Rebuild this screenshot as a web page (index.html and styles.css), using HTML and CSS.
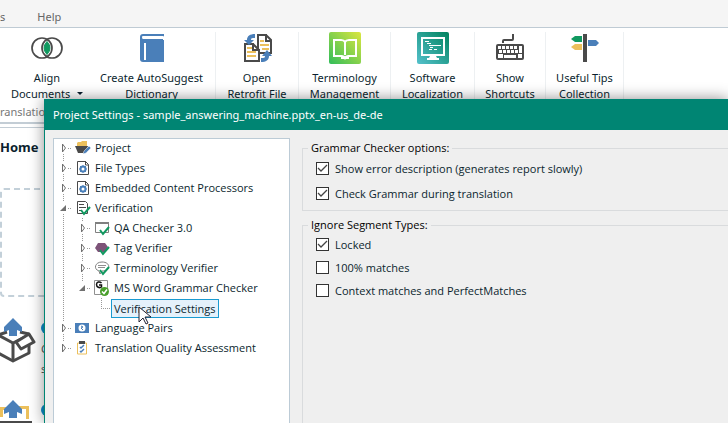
FILE: index.html
```html
<!DOCTYPE html>
<html lang="en">
<head>
<meta charset="utf-8">
<title>Project Settings</title>
<link rel="stylesheet" href="styles.css">
</head>
<body>
<div class="app">
  <nav class="tabs"><a href="#addins">s</a><a href="#help">Help</a></nav>
  <div class="ribbon">
    <button class="tool"><svg width="32" height="32" viewBox="0 0 32 32"><path d="M16 9.500q6 6.500 0 13q-6-6.500 0-13z" fill="#109960" stroke="#109960"/><g fill="none" stroke="#4a4a4a" stroke-width="1.700"><circle cx="11" cy="16" r="10"/><circle cx="21" cy="16" r="10"/></g></svg><span>Align<br>Documents <i class="caret"></i></span></button>
    <button class="tool"><svg width="32" height="32" viewBox="0 0 32 32"><path d="M7 2h21v28H7a3 3 0 0 1-3-3V5a3 3 0 0 1 3-3z" fill="#4a7fb9"/><path d="M6 5q0-1 1-1h20q1 0 1 1v3h-1V7H7q-1 0-1-2z" fill="#fff"/><path d="M8 11h2v17H8z" fill="#fff"/></svg><span>Create AutoSuggest<br>Dictionary</span></button>
    <button class="tool sep"><svg width="32" height="32" viewBox="0 0 32 32"><path d="M17 3h8l5 5v13H17z" fill="#fff" stroke="#4a4a4a" stroke-width="2"/><path d="M25 2v7h6" fill="none" stroke="#4a4a4a" stroke-width="2"/><path d="M19 9h4M19 13h9M21 17h7" stroke="#ecc05c" stroke-width="2"/><path d="M4 12h8l6 6v11H4z" fill="#fff" stroke="#4a4a4a" stroke-width="2"/><path d="M12 11v7h7" fill="none" stroke="#4a4a4a" stroke-width="2"/><path d="M6 16h5M6 20h9M6 24h9" stroke="#ecc05c" stroke-width="2"/><path d="M3 8h3c0-4 3-6 8-6v4c-3 0-4 0-4 2h3l-5 5zM31 24h-3c0 4-3 6-8 6v-4c3 0 4 0 4-2h-3l5-6z" fill="#4a7fb9"/></svg><span>Open<br>Retrofit File</span></button>
    <button class="tool sep"><svg width="32" height="32" viewBox="0 0 32 32"><defs><linearGradient id="lime" x1="0" y1="1" x2="1" y2="0"><stop stop-color="#31bd59"/><stop offset="1" stop-color="#dce640"/></linearGradient></defs><rect width="32" height="32" rx="2" fill="url(#lime)"/><path d="M16 10q-1-2-4-2H5v16h8q2 0 3 2q1-2 3-2h8V8h-7q-3 0-4 2zv13" fill="none" stroke="#fff" stroke-width="2"/><path d="M12 25h8v2h-8z" fill="#fff"/></svg><span>Terminology<br>Management</span></button>
    <button class="tool sep"><svg width="32" height="32" viewBox="0 0 32 32"><defs><linearGradient id="teal" x1="0" y1="1" x2="1" y2="0"><stop stop-color="#55c1cc"/><stop offset="1" stop-color="#00835e"/></linearGradient></defs><rect width="32" height="32" rx="2" fill="url(#teal)"/><path d="M5 6h22v17H5z" fill="none" stroke="#fff" stroke-width="2"/><path d="M13 24h6l1 2h2v2H10v-2h2z" fill="#fff"/><path d="M8 9.500h4M10 11.500h4M12 13.500h7M19 13.500h5M13 15.500h3M12 17.500h3M17 17.500h3" stroke="#fff"/></svg><span>Software<br>Localization</span></button>
    <button class="tool sep"><svg width="32" height="32" viewBox="0 0 32 32"><path d="M9 11V9q0-1 1-1h8q1 0 1-1V2" fill="none" stroke="#4a4a4a" stroke-width="2"/><rect x="2" y="12" width="28" height="16" rx="2" fill="#4a4a4a"/><path d="M4 15.500h20M5 19.500h19" stroke="#fff" stroke-width="3" stroke-dasharray="3 1"/><path d="M25 14h3v7h-3zM4 22h5v4H4zM10 23h12v3H10zM24 22h4v4h-4z" fill="#fff"/></svg><span>Show<br>Shortcuts</span></button>
    <button class="tool sep last"><svg width="32" height="32" viewBox="0 0 32 32"><path d="M14 2h4v28h-4z" fill="#4a4a4a"/><path d="M13 4v6H6L2 7l4-3z" fill="#109960"/><path d="M13 12v6H6l-4-3 4-3z" fill="#ecc05c"/><path d="M19 8v6h8l3-3-3-3z" fill="#4a7fb9"/></svg><span>Useful Tips<br>Collection</span></button>
  </div>
  <div class="caption">ranslation</div>
  <main class="home">
    <h1>Home</h1>
    <div class="drop"></div>
    <div class="entry"><svg width="36" height="48" viewBox="0 0 36 48"><g fill="#fff" stroke="#4a4a4a" stroke-width="3" stroke-linejoin="round"><path d="M-2 18l15 8 16-8v18l-16 8-15-8"/><path d="M13 26v18M-2 18l9-3M20 15l9 2"/><path d="M16 25l13-8 5 8-13 7z"/></g><path d="M13 1l9 9v5l-5-2v6H9v-6l-5 2v-5z" fill="#4a7fb9"/></svg><p><b class="dot"></b>C<br>s</p></div>
    <div class="entry"><svg width="36" height="48" viewBox="0 0 36 48"><path d="M0 8h7v3H3v7H0zM18 7h11v13h-3V10h-8z" fill="#ecc05c"/><path d="M0 22h32v4H0z" fill="#4a4a4a"/><path d="M13 1l9 9v5l-5-2v6H9v-6l-5 2v-5z" fill="#4a7fb9"/></svg><p><b class="dot"></b></p></div>
  </main>
</div>
<section class="dialog" role="dialog" aria-labelledby="dialog-title">
  <h2 id="dialog-title">Project Settings - sample_answering_machine.pptx_en-us_de-de</h2>
  <svg class="defs" width="0" height="0"><defs>
    <symbol id="closed" viewBox="0 0 16 12"><path d="M3.500 2v8l3-4z" fill="#fff" stroke="#707070"/><path d="M9 6.500h4" stroke="#999" stroke-dasharray="1 1"/></symbol>
    <symbol id="open" viewBox="0 0 16 12"><path d="M7 3v6H1z" fill="#707070"/><path d="M9 6.500h4" stroke="#999" stroke-dasharray="1 1"/></symbol>
    <symbol id="gear" viewBox="0 0 16 16"><path d="M2.500 1.500h8l3 3v10h-11z" fill="#fff" stroke="#4a4a4a"/><path d="M10.500 1v4h3" fill="none" stroke="#4a4a4a"/><circle cx="8" cy="9" r="2.500" fill="none" stroke="#4a7fb9" stroke-width="2"/><path d="M8 5v1.500M8 11.500V13M4 9h1.500M10.500 9H12M5 6l1 1M11 6l-1 1M5 12l1-1M11 12l-1-1" stroke="#4a7fb9"/></symbol>
    <symbol id="tick" viewBox="0 0 16 16"><path d="M6 10l3 4 6-7" fill="none" stroke="#109960" stroke-width="2"/></symbol>
  </defs></svg>
  <div class="content">
    <ul class="tree">
      <li><div class="row"><svg class="exp"><use href="#closed"/></svg><svg class="ico" viewBox="0 0 16 16"><path d="M2 6V3l1-1h3l1-1h5v5z" fill="#ecc05c"/><path d="M0 6h13l-2 7H3z" fill="#4a4a4a"/><path d="M8 14l1-3 5-5 2 2-5 5z" fill="#4a7fb9" stroke="#fff" stroke-width=".5"/></svg><span>Project</span></div></li>
      <li><div class="row"><svg class="exp"><use href="#closed"/></svg><svg class="ico"><use href="#gear"/></svg><span>File Types</span></div></li>
      <li><div class="row"><svg class="exp"><use href="#closed"/></svg><svg class="ico"><use href="#gear"/></svg><span>Embedded Content Processors</span></div></li>
      <li><div class="row"><svg class="exp"><use href="#open"/></svg><svg class="ico" viewBox="0 0 16 16"><path d="M2.500 1.500h8l2 2v10h-10z" fill="#fff" stroke="#4a4a4a"/><path d="M4 4.500h5M4 7.500h7M4 10.500h3" stroke="#4a4a4a"/><use href="#tick"/></svg><span>Verification</span></div>
        <ul>
          <li><div class="row"><svg class="exp"><use href="#closed"/></svg><svg class="ico" viewBox="0 0 16 16"><path d="M1.500 2.500h13v10h-13z" fill="#fff" stroke="#808080"/><path d="M1 2h14v2H1z" fill="#808080"/><use href="#tick"/></svg><span>QA Checker 3.0</span></div></li>
          <li><div class="row"><svg class="exp"><use href="#closed"/></svg><svg class="ico" viewBox="0 0 16 16"><path d="M4 3h7l3 4-3 5H4L1 8z" fill="#7d5378"/><use href="#tick"/></svg><span>Tag Verifier</span></div></li>
          <li><div class="row"><svg class="exp"><use href="#closed"/></svg><svg class="ico" viewBox="0 0 16 16"><path d="M8 2c9 0 9 9 0 9l-2 3-1-3C-1 9 1 2 8 2z" fill="#fff" stroke="#808080"/><path d="M4 5.500h8M4 7.500h7" stroke="#909090"/><use href="#tick"/></svg><span>Terminology Verifier</span></div></li>
          <li><div class="row"><svg class="exp"><use href="#open"/></svg><svg class="ico" viewBox="0 0 16 16"><path d="M.500.500h13v14h-13z" fill="#fff" stroke="#909090"/><path d="M7.500 3C5.500 1 2.500 2 2.500 4.500S5.500 8.500 7.500 7V5H5" fill="none" stroke="#111" stroke-width="1.500"/><circle cx="10.500" cy="11.500" r="4.500" fill="#4aa02c"/><path d="M8 11.500l2 2 3-4" fill="none" stroke="#fff" stroke-width="1.500"/></svg><span>MS Word Grammar Checker</span></div>
            <ul class="leaf"><li><div class="row"><span class="selected">Verification Settings</span></div></li></ul>
          </li>
        </ul>
      </li>
      <li><div class="row"><svg class="exp"><use href="#closed"/></svg><svg class="ico" viewBox="0 0 16 16"><path d="M0 3h14v10H0z" fill="#4a7fb9"/><circle cx="7" cy="8" r="3.500" fill="#fff"/><path d="M6 6l2 1-2 1 2 2" fill="none" stroke="#4a7fb9"/></svg><span>Language Pairs</span></div></li>
      <li><div class="row"><svg class="exp"><use href="#closed"/></svg><svg class="ico" viewBox="0 0 16 16"><path d="M2.500 3h9v11h-9z" fill="#fff" stroke="#ecc05c"/><path d="M4 1h6v3H4z" fill="#4a4a4a"/><path d="M5 7l1 1 3-3M5 11l1 1 3-3" fill="none" stroke="#4a7fb9" stroke-width="1.500"/></svg><span>Translation Quality Assessment</span></div></li>
    </ul>
    <div class="options">
      <fieldset>
        <legend>Grammar Checker options:</legend>
        <label><input type="checkbox" checked>Show error description (generates report slowly)</label>
        <label><input type="checkbox" checked>Check Grammar during translation</label>
      </fieldset>
      <fieldset class="types">
        <legend>Ignore Segment Types:</legend>
        <label><input type="checkbox" checked>Locked</label>
        <label><input type="checkbox">100% matches</label>
        <label><input type="checkbox">Context matches and PerfectMatches</label>
      </fieldset>
    </div>
  </div>
</section>
<svg class="pointer" width="14" height="20" viewBox="0 0 14 20"><path d="M1 1v15l4-4 3 6 2-1-3-6h6z" fill="#fff" stroke="#223"/></svg>
</body>
</html>
```
FILE: styles.css
```css
* { box-sizing: border-box; }
body {
  margin: 0;
  height: 100vh;
  overflow: hidden;
  position: relative;
  font: 11px/16px "Noto Sans", "Open Sans", sans-serif;
  color: #0b1f2e;
  background: #fff;
}
.app { height: 100%; overflow: hidden; }
.tabs {
  display: flex;
  gap: 32px;
  height: 28px;
  padding-top: 9px;
  background: #f5f5f5;
  border-bottom: 1px solid #bfcbd4;
}
.tabs a { color: #666; text-decoration: none; }
.ribbon {
  display: grid;
  grid-template-columns: 94px 121px 83px 92px 84px 71px 79px;
  padding-top: 4px;
}
.tool {
  display: flex;
  flex-direction: column;
  align-items: center;
  gap: 6px;
  height: 72px;
  padding: 0;
  border: 0;
  background: none;
  font: inherit;
  color: inherit;
  white-space: nowrap;
}
.tool:nth-child(2) { padding-right: 6px; }
.tool svg { flex: none; }
.sep { border-left: 1px solid #edf0f2; }
.last { border-right: 1px solid #edf0f2; }
.caret {
  display: inline-block;
  margin-left: 4px;
  border: 3px solid transparent;
  border-top-color: #0b1f2e;
  border-bottom: 0;
  vertical-align: 3px;
}
.caption {
  height: 20px;
  color: #777;
  border-bottom: 2px solid #c3cdd5;
}
.home { border-top: 1px solid #c3cdd5; margin-top: 3px; }
.home h1 { margin: 9px 0 31px; font: bold 13px/20px "Noto Sans", sans-serif; }
.drop {
  height: 109px;
  margin-bottom: 20px;
  border: 2px dashed #c3d0d9;
  border-radius: 4px;
}
.entry { display: flex; gap: 5px; height: 82px; }
.entry p { margin: 5px 0; line-height: 20px; color: #555; }
.dot { display: block; width: 12px; height: 12px; border-radius: 6px; background: #0d8dcb; margin-bottom: 5px; }

.dialog {
  position: absolute;
  inset: 99px 0 0 44px;
  display: flex;
  flex-direction: column;
  background: #efefef;
  border-left: 1px solid #008573;
  box-shadow: 0 0 14px rgba(0, 0, 0, .45);
}
.dialog h2 {
  margin: 0;
  padding: 0 8px;
  background: #008573;
  color: #fff;
  font-size: 11px;
  font-weight: 400;
  line-height: 31px;
}
.defs { display: block; }
.content {
  display: flex;
  flex: 1;
  gap: 12px;
  padding: 8px 0 0 8px;
  font-family: "Open Sans", "Noto Sans", sans-serif;
}
.tree {
  flex: 0 0 237px;
  padding: 0 6px;
  background: #fff;
  box-shadow: inset 1px 1px #bccbd6, inset -1px 0 #bccbd6;
}
ul { margin: 0; padding: 0; list-style: none; }
.tree li {
  background: repeating-linear-gradient(#999 0 1px, #fff 1px 2px) 4px 0 / 1px 100% no-repeat;
}
.tree > li:first-child { background-position: 4px 10px; }
.tree li:last-child { background-size: 1px 10px; }
.tree ul { margin-left: 19px; }
.row { display: flex; align-items: center; height: 20px; white-space: nowrap; }
.exp { width: 16px; height: 12px; background: #fff; flex: none; }
.ico { width: 16px; height: 16px; margin-right: 4px; flex: none; }
.leaf .row {
  padding-left: 14px;
  background: repeating-linear-gradient(90deg, #999 0 1px, #fff 1px 2px) 4px 10px / 10px 1px no-repeat;
}
.selected {
  padding: 0 2px;
  line-height: 17px;
  border: 1px solid #1a9ad0;
  background: #e5f1fb;
}
.options {
  display: flex;
  flex-direction: column;
  gap: 6px;
  flex: 1;
  min-width: 0;
  padding-top: 2px;
}
fieldset {
  margin: 0;
  padding: 0 13px 4px;
  border: 1px solid #d9dbdd;
  border-right: 0;
}
legend { padding: 0 3px; margin-left: -8px; line-height: 16px; color: #000; }
fieldset label { display: flex; align-items: center; gap: 6px; height: 25px; }
.types { flex: 1; border-bottom: 0; }
.types label { height: 23px; }
input {
  appearance: none;
  width: 13px;
  height: 13px;
  margin: 0;
  border: 1px solid #333;
  background: #fff;
}
input:checked {
  background: #fff url("data:image/svg+xml,%3Csvg xmlns='http://www.w3.org/2000/svg' viewBox='0 0 11 11'%3E%3Cpath d='M1 5l3 3 6-6' fill='none' stroke='%23444' stroke-width='1.300'/%3E%3C/svg%3E");
}
.pointer { position: absolute; left: 138px; top: 306px; }
```
